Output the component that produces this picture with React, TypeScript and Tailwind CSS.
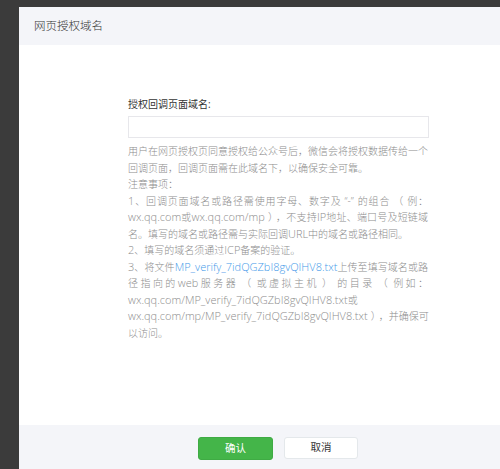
import React from "react";

const font = {
  fontFamily: '"Open Sans", "Noto Sans CJK SC", sans-serif',
};

// Latin runs are set a little larger, as the original UI font draws them
function E({ children }: { children: React.ReactNode }) {
  return <span className="text-[11px]">{children}</span>;
}

// brackets and quotes carry some air on both sides
function P({ children }: { children: React.ReactNode }) {
  return <span className="px-[3px]">{children}</span>;
}

// [content, stretched to the full width?]
const lines: [React.ReactNode, boolean][] = [
  ["用户在网页授权页同意授权给公众号后，微信会将授权数据传给一个", true],
  ["回调页面，回调页面需在此域名下，以确保安全可靠。", false],
  ["注意事项：", false],
  [
    <>
      <E>1</E>、回调页面域名或路径需使用字母、数字及<P>“-”</P>的组合<P>（</P>例：
    </>,
    true,
  ],
  [
    <>
      <E>wx.qq.com</E>或<E>wx.qq.com/mp</E>
      <P>）</P>，不支持<E>IP</E>地址、端口号及短链域
    </>,
    true,
  ],
  [
    <>
      名。填写的域名或路径需与实际回调<E>URL</E>中的域名或路径相同。
    </>,
    false,
  ],
  [
    <>
      <E>2</E>、填写的域名须通过<E>ICP</E>备案的验证。
    </>,
    false,
  ],
  [
    <>
      <E>3</E>、将文件
      <a className="text-[#459ae9]">
        <E>MP_verify_7idQGZbI8gvQIHV8.txt</E>
      </a>
      上传至填写域名或路
    </>,
    true,
  ],
  [
    <>
      径指向的<E>web</E>服务器<P>（</P>或虚拟主机<P>）</P>的目录<P>（</P>例如：
    </>,
    true,
  ],
  [
    <>
      <E>wx.qq.com/MP_verify_7idQGZbI8gvQIHV8.txt</E>或
    </>,
    false,
  ],
  [
    <>
      <E>wx.qq.com/mp/MP_verify_7idQGZbI8gvQIHV8.txt</E>
      <P>）</P>，并确保可
    </>,
    true,
  ],
  ["以访问。", false],
];

export default function App() {
  return (
    <div
      lang="zh-CN"
      className="h-screen w-screen overflow-hidden bg-[#3b3b3b] pl-[19px] pt-[7px]"
      style={font}
    >
      <div className="flex h-full w-[518px] flex-col bg-white">
        {/* Header */}
        <div className="flex h-[38px] shrink-0 items-center bg-[#f4f5f9] pl-[15px]">
          <h3 className="text-[11.5px] font-light text-[#353535]">网页授权域名</h3>
        </div>

        {/* Body */}
        <div className="flex-1 pt-[51px]">
          <div className="mx-auto w-[300px]">
            <label className="block text-[10px] leading-[16px] text-[#353535]">
              授权回调页面域名:
            </label>
            <input
              className="mt-[4px] block h-[22px] w-[301px] border border-[#e7e7eb] bg-white outline-none"
              type="text"
            />
            <div className="mt-[5px] text-[10px] font-light leading-[16.5px] text-[#8d8d8d] [font-feature-settings:'chws'_0,'halt'_0]">
              {lines.map(([l, full], i) => (
                <div
                  key={i}
                  className={
                    full
                      ? "whitespace-nowrap text-justify [text-align-last:justify]"
                      : "whitespace-nowrap"
                  }
                >
                  {l}
                </div>
              ))}
            </div>
          </div>
        </div>

        {/* Footer */}
        <div className="flex h-[44px] shrink-0 items-start justify-center gap-[11px] bg-[#f4f5f9] pt-[12px]">
          <button className="h-[23px] w-[75px] rounded-[3px] border border-[#3fab44] bg-[#44b549] text-[10.5px] text-white">
            确认
          </button>
          <button className="h-[22px] w-[74px] rounded-[3px] border border-[#e4e8eb] bg-white text-[10.5px] text-[#353535]">
            取消
          </button>
        </div>
      </div>
    </div>
  );
}
